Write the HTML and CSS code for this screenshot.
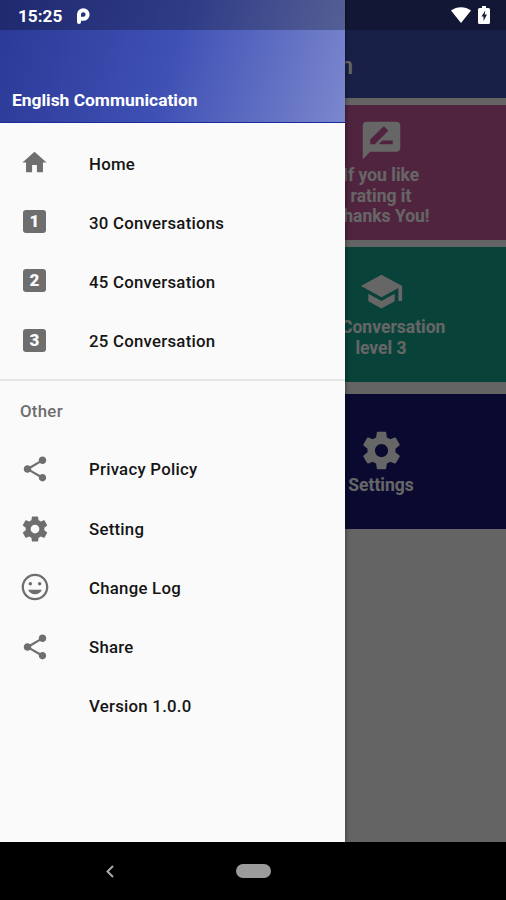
FILE: index.html
```html
<!DOCTYPE html>
<html lang="en">
  <head>
    <meta charset="utf-8">
    <title>English Communication</title>
    <link rel="stylesheet" href="styles.css">
  </head>

  <body>
    <div class="screen">
      <main class="page">
        <header class="toolbar">
          <h1>English Conversation</h1>
        </header>
        <div class="cards">
          <div class="card rate">
            <svg viewBox="0 0 24 24"><path d="M20 2H4c-1.1 0-1.99.9-1.99 2L2 22l4-4h14c1.1 0 2-.9 2-2V4c0-1.1-.9-2-2-2zM6 14v-2.47l6.88-6.88c.2-.2.51-.2.71 0l1.77 1.77c.2.2.2.51 0 .71L8.47 14H6zm12 0h-7.5l2-2H18v2z"/></svg>
            <p>If you like<br>rating it<br>Thanks You!</p>
          </div>
          <div class="card level">
            <svg viewBox="0 0 24 24"><path d="M5 13.18v4L12 21l7-3.82v-4L12 17l-7-3.82zM12 3L1 9l11 6 9-4.91V17h2V9L12 3z"/></svg>
            <p>25 Conversation<br>level 3</p>
          </div>
          <div class="card settings">
            <svg viewBox="0 0 24 24"><use href="#gear"/></svg>
            <p>Settings</p>
          </div>
        </div>
      </main>

      <div class="scrim"></div>

      <nav class="drawer">
        <div class="drawer-header">English Communication</div>
        <ul>
          <li>
            <svg class="home" viewBox="0 0 24 24"><path d="M10 20v-6h4v6h5v-8h3L12 3 2 12h3v8z"/></svg>
            Home
          </li>
          <li><span class="number">1</span>30 Conversations</li>
          <li><span class="number">2</span>45 Conversation</li>
          <li><span class="number">3</span>25 Conversation</li>
        </ul>
        <h2>Other</h2>
        <ul>
          <li>
            <svg viewBox="0 0 24 24"><path id="share" d="M18 16.08c-.76 0-1.44.3-1.96.77L8.91 12.7c.05-.23.09-.46.09-.7s-.04-.47-.09-.7l7.05-4.11c.54.5 1.25.81 2.04.81 1.66 0 3-1.34 3-3s-1.34-3-3-3-3 1.34-3 3c0 .24.04.47.09.7L8.04 9.81C7.5 9.31 6.79 9 6 9c-1.66 0-3 1.34-3 3s1.34 3 3 3c.79 0 1.5-.31 2.04-.81l7.12 4.16c-.05.21-.08.43-.08.65 0 1.61 1.31 2.92 2.92 2.92s2.92-1.31 2.92-2.92-1.31-2.92-2.92-2.92z"/></svg>
            Privacy Policy
          </li>
          <li>
            <svg viewBox="0 0 24 24"><path id="gear" d="M19.43 12.98c.04-.32.07-.64.07-.98s-.03-.66-.07-.98l2.11-1.65c.19-.15.24-.42.12-.64l-2-3.46c-.12-.22-.39-.3-.61-.22l-2.49 1c-.52-.4-1.08-.73-1.69-.98l-.38-2.65C14.46 2.18 14.25 2 14 2h-4c-.25 0-.46.18-.49.42l-.38 2.65c-.61.25-1.17.59-1.69.98l-2.49-1c-.23-.09-.49 0-.61.22l-2 3.46c-.13.22-.07.49.12.64l2.11 1.65c-.04.32-.07.65-.07.98s.03.66.07.98l-2.11 1.65c-.19.15-.24.42-.12.64l2 3.46c.12.22.39.3.61.22l2.49-1c.52.4 1.08.73 1.69.98l.38 2.65c.03.24.24.42.49.42h4c.25 0 .46-.18.49-.42l.38-2.65c.61-.25 1.17-.59 1.69-.98l2.49 1c.23.09.49 0 .61-.22l2-3.46c.12-.22.07-.49-.12-.64l-2.11-1.65zM12 15.5c-1.93 0-3.5-1.57-3.5-3.5s1.57-3.5 3.5-3.5 3.5 1.57 3.5 3.5-1.57 3.5-3.5 3.5z"/></svg>
            Setting
          </li>
          <li>
            <svg class="mood" viewBox="0 0 24 24"><path d="M11.99 2C6.47 2 2 6.48 2 12s4.47 10 9.99 10C17.52 22 22 17.52 22 12S17.52 2 11.99 2zM12 20.3c-4.58 0-8.3-3.72-8.3-8.3s3.72-8.3 8.3-8.3 8.3 3.72 8.3 8.3-3.72 8.3-8.3 8.3z"/><circle cx="8.5" cy="9.5" r="1.3"/><circle cx="15.5" cy="9.5" r="1.3"/><path d="M12 17.5c2.33 0 4.31-1.46 5.11-3.5H6.89c.8 2.04 2.78 3.5 5.11 3.5z"/></svg>
            Change Log
          </li>
          <li>
            <svg viewBox="0 0 24 24"><use href="#share"/></svg>
            Share
          </li>
          <li class="no-icon">Version 1.0.0</li>
        </ul>
      </nav>

      <div class="status-bar">
        <span>15:25</span>
        <svg class="pie" viewBox="0 0 13 16"><path d="M2 14V6.500a4.300 4.300 0 1 1 4.300 4.300H4"/></svg>
        <svg class="wifi" viewBox="0 0 20 16"><path d="M0 3.6C5.5-1 14.500-1 20 3.600L10 16z"/></svg>
        <svg class="battery" viewBox="0 0 12 18"><path class="cell" d="M4 0h4v2h2.500Q12 2 12 3.500v13q0 1.500-1.500 1.500h-9Q0 18 0 16.500v-13Q0 2 1.500 2H4z"/><path class="bolt" d="M7.200 4.500L3.500 10.500h2v4.500l3.500-6.500H6.700z"/></svg>
      </div>
    </div>

    <footer class="nav-bar">
      <svg class="back" viewBox="0 0 8 13"><path d="M7 1L1.500 6.500 7 12"/></svg>
      <span class="pill"></span>
    </footer>
  </body>
</html>
```
FILE: styles.css
```css
* {
  box-sizing: border-box;
}

body {
  margin: 0;
  width: 506px;
  height: 900px;
  background: #000;
  font-family: Roboto, sans-serif;
  overflow: hidden;
}

h1,
h2,
p,
ul {
  margin: 0;
  padding: 0;
  font-weight: 500;
  list-style: none;
}

svg {
  display: block;
  flex: none;
}

.screen {
  position: relative;
  height: 842px;
  overflow: hidden;
}

.page {
  height: 100%;
  background: #fafafa;
}

.toolbar {
  height: 98px;
  padding: 51px 153px 0 0;
  background: #3f51b5;
  color: #fff;
  text-align: right;
}

.toolbar h1 {
  font-size: 24px;
  line-height: 30px;
}

.cards {
  display: flex;
  flex-direction: column;
  margin-left: 256px;
  padding-top: 7px;
}

.card {
  display: flex;
  flex-direction: column;
  align-items: center;
  justify-content: center;
  gap: 2px;
  height: 135px;
  color: #fff;
  font-size: 17.5px;
  line-height: 20.4px;
  text-align: center;
}

.card p {
  font-weight: 700;
}

.card svg {
  width: 45px;
  height: 45px;
  fill: #fff;
}

.rate {
  background: #c85a9e;
}

.level {
  margin-top: 7px;
  background: #14a68e;
}

.level svg {
  margin-top: -2px;
  margin-bottom: 1px;
}

.settings {
  margin-top: 12px;
  background: #191b7a;
}

.scrim {
  position: absolute;
  inset: 0;
  background: rgba(0, 0, 0, 0.6);
}

/* Drawer */
.drawer {
  position: absolute;
  top: 0;
  left: 0;
  width: 345px;
  height: 100%;
  background: #fafafa;
  color: #151515;
  box-shadow: 0 0 5px rgba(0, 0, 0, 0.5);
}

.drawer-header {
  height: 123px;
  padding: 90px 0 0 12px;
  border-bottom: 1px solid #1a2b9c;
  background: linear-gradient(105deg, #2b3896, #3f51b5 50%, #7b87cd);
  color: #fff;
  font-size: 17.4px;
  font-weight: 700;
  line-height: 21px;
}

.drawer ul {
  padding-top: 11px;
}

.drawer li {
  display: flex;
  align-items: center;
  height: 59.2px;
  font-size: 16.8px;
  letter-spacing: 0.25px;
}

.drawer li svg {
  width: 30px;
  height: 30px;
  margin: 0 39px 0 20px;
  fill: #6e6e6e;
}

.drawer li .home {
  width: 29px;
  height: 29px;
  margin: 0 40px 2px 20px;
}

.drawer li .mood {
  width: 32px;
  height: 32px;
  margin: 0 38px 1px 19px;
}

.number {
  width: 23px;
  height: 23px;
  margin: 0 43px 2px 23px;
  border-radius: 3px;
  background: #6e6e6e;
  color: #fafafa;
  font-size: 17px;
  font-weight: 900;
  line-height: 23px;
  letter-spacing: 0;
  text-align: center;
}

.drawer .no-icon {
  padding-left: 89px;
}

.drawer h2 {
  height: 49px;
  margin-top: 8px;
  padding: 20px 0 0 20px;
  border-top: 2px solid #e6e6e6;
  color: #6e6e6e;
  font-size: 16.8px;
  line-height: 21px;
  letter-spacing: 0.3px;
}

.drawer h2 + ul {
  padding-top: 12px;
}

/* System bars */
.status-bar {
  position: absolute;
  top: 0;
  left: 0;
  display: flex;
  align-items: center;
  width: 100%;
  height: 30px;
  padding: 1px 16px 0 18px;
  background: rgba(0, 0, 0, 0.26);
  color: #fff;
  font-size: 17.2px;
  font-weight: 700;
}

.pie {
  width: 13px;
  height: 16px;
  margin-left: 15px;
  fill: none;
  stroke: #fff;
  stroke-width: 4;
  stroke-linecap: round;
}

.wifi {
  width: 20px;
  height: 16px;
  margin: 0 7px 2px auto;
  fill: #fff;
}

.battery {
  width: 12px;
  height: 18px;
  margin-bottom: 1px;
}

.cell {
  fill: #fff;
}

.bolt {
  fill: #141a40;
}

.nav-bar {
  display: flex;
  align-items: center;
  height: 58px;
  padding-left: 106px;
}

.back {
  width: 8px;
  height: 13px;
  fill: none;
  stroke: #aaa;
  stroke-width: 2;
}

.pill {
  width: 35px;
  height: 14px;
  margin-left: 122px;
  border-radius: 7px;
  background: #9b9b9b;
}
```
